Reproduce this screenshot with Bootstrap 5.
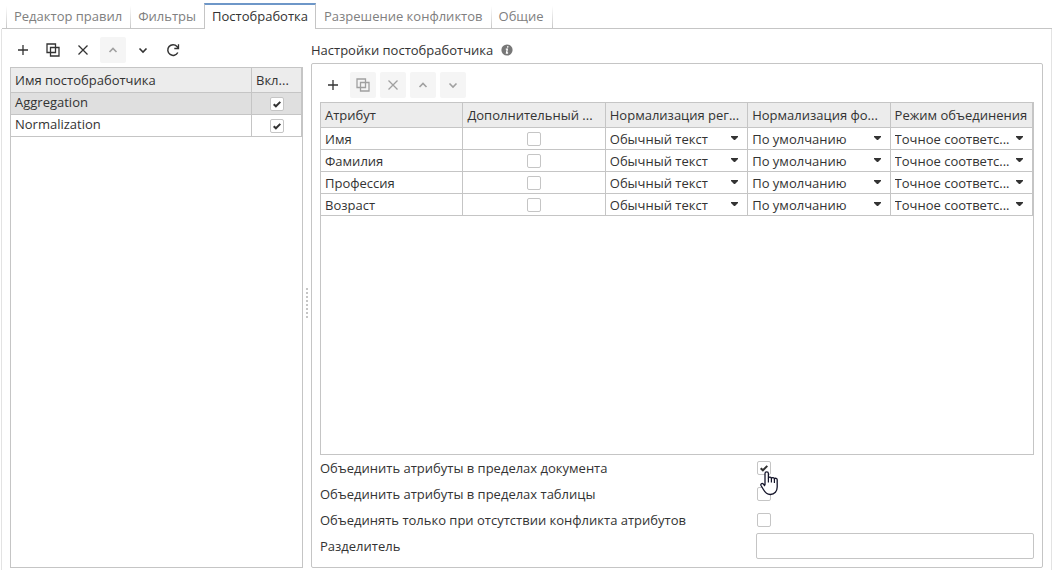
<!DOCTYPE html>
<html lang="ru">
<head>
<meta charset="utf-8">
<meta name="viewport" content="width=device-width, initial-scale=1">
<title>Постобработка</title>
<link href="https://cdn.jsdelivr.net/npm/bootstrap@5.3.0/dist/css/bootstrap.min.css" rel="stylesheet">
<style>
  :root { --line: #c5c5c5; --ink: #333; --soft: #e3e3e3; }
  body { font-family: "Open Sans", "Noto Sans", sans-serif; font-size: 13px; line-height: 20px; color: var(--ink); background: #fff; }
  .page { padding: 3px 7px 0 1px; }
  .rule-tabs { --bs-nav-tabs-border-color: var(--line); padding-left: 4px; margin-left: 1px; flex-wrap: nowrap; }
  .rule-tabs .nav-link { color: #808080; padding: 3px 8px 2px 7px; border: 0; border-radius: 0; margin: 0; white-space: nowrap; line-height: 20px; }
  .rule-tabs .nav-item { border-left: 1px solid; border-image: linear-gradient(#fff 15%, var(--line)) 1; }
  .rule-tabs .nav-item:last-child { border-right: 1px solid; }
  .rule-tabs .nav-item.current { border: 1px solid var(--line); border-image: none; border-top: 2px solid #6e97c8; border-bottom: 0; margin-bottom: -1px; background: #fff; z-index: 1; }
  .rule-tabs .nav-item.current .nav-link { color: var(--ink); background: none; padding: 1px 7px 3px; }
  .rule-tabs .nav-item.current + .nav-item { border-left: 0; }
  .rule-tabs .nav-item.current + .nav-item .nav-link { padding-left: 8px; }
  .tab-body { border: 1px solid var(--soft); border-width: 0 1px; padding: 8px 8px 2px; min-height: 0; }
  .tool { width: 26px; height: 26px; padding: 0; border: 0; border-radius: 2px; display: grid; place-items: center; color: var(--ink); background: transparent; }
  .tool:disabled { background: #f5f5f5; color: #a0a0a0; opacity: 1; }
  .tool svg { width: 16px; height: 16px; fill: none; stroke: currentColor; stroke-width: 1.3; }
  .side { flex: 0 0 293px; }
  .frame { border: 1px solid var(--line); }
  .grid-table { table-layout: fixed; border-collapse: separate; border-spacing: 0; width: 100%; }
  .grid-table th, .grid-table td { border-right: 1px solid var(--line); border-bottom: 1px solid var(--line); padding: 0 4px; height: 22px; font-weight: 400; white-space: nowrap; overflow: hidden; }
  .grid-table th { background: #ececec; height: 25px; }
  .grid-table .picked td { background: #dfdfdf; }
  .side .grid-table td:first-child { line-height: 19px; padding-bottom: 2px; }
  .tick { appearance: none; display: block; width: 14px; height: 14px; margin: 0 auto; border: 1px solid var(--line); border-radius: 2px; background: #fff center / 12px 12px no-repeat; }
  .tick:checked { background-image: url("data:image/svg+xml,%3Csvg xmlns='http://www.w3.org/2000/svg' viewBox='0 0 12 12'%3E%3Cpath d='M2.7 6.2 4.9 8.3 9.3 3.9' fill='none' stroke='%23333' stroke-width='2'/%3E%3C/svg%3E"); }
  .pick { appearance: none; display: block; width: 100%; height: 21px; border: 0; border-radius: 0; padding: 0 14px 0 0; color: inherit; font: inherit; line-height: 20px; background: transparent url("data:image/svg+xml,%3Csvg xmlns='http://www.w3.org/2000/svg' viewBox='0 0 7 4'%3E%3Cpath d='M0 0H7V1L4 4H3L0 1Z' fill='%23333'/%3E%3C/svg%3E") right 5px top 8px / 7px 4px no-repeat; }
  .splitter { flex: 0 0 8px; }
  .splitter i { width: 2px; height: 30px; background: repeating-linear-gradient(#c5c5c5 0 2px, transparent 2px 4px); }
  .content { min-width: 0; }
  .settings { border: 1px solid var(--line); border-radius: 2px; padding: 8px; min-height: 0; }
  .settings-title { height: 26px; }
  .options > div { min-height: 26px; display: flex; align-items: center; }
  .options label { flex: 0 0 61%; }
  .options .tick { margin: 0 1px; }
  .options input[type=text] { height: 26px; border: 1px solid var(--line); border-radius: 2px; min-width: 0; padding: 0 4px; }
  .hand { position: absolute; left: 4px; top: 10px; width: 18px; height: 25px; z-index: 2; }
</style>
</head>
<body>
<div class="page vh-100 d-flex flex-column">
  <ul class="nav nav-tabs rule-tabs">
    <li class="nav-item"><a class="nav-link" href="#">Редактор правил</a></li>
    <li class="nav-item"><a class="nav-link" href="#">Фильтры</a></li>
    <li class="nav-item current"><a class="nav-link" href="#" aria-current="page">Постобработка</a></li>
    <li class="nav-item"><a class="nav-link" href="#">Разрешение конфликтов</a></li>
    <li class="nav-item"><a class="nav-link" href="#">Общие</a></li>
  </ul>

  <main class="tab-body d-flex flex-grow-1">
    <section class="side d-flex flex-column">
      <div class="d-flex gap-1 mb-1">
        <button class="tool" type="button" aria-label="Добавить"><svg viewBox="0 0 16 16"><path d="M8 3v10M3 8h10"/></svg></button>
        <button class="tool" type="button" aria-label="Копировать"><svg viewBox="0 0 16 16"><path d="M2 2h8.500v8.500H2zM5.500 5.500H14V14H5.500z"/></svg></button>
        <button class="tool" type="button" aria-label="Удалить"><svg viewBox="0 0 16 16"><path d="m3.500 3.500 9 9m0-9-9 9"/></svg></button>
        <button class="tool" type="button" aria-label="Выше" disabled><svg viewBox="0 0 16 16"><path d="m4.500 10 3.500-3.500L11.500 10" stroke-width="1.600"/></svg></button>
        <button class="tool" type="button" aria-label="Ниже"><svg viewBox="0 0 16 16"><path d="m4.500 6.500 3.500 3.500 3.500-3.500" stroke-width="1.600"/></svg></button>
        <button class="tool" type="button" aria-label="Обновить"><svg viewBox="0 0 16 16"><path d="M12.800 10.500a5.300 5.300 0 1 1-.8-6L13 5.700" stroke-width="1.500"/><path d="M13.500 2.300v4.200H9.300"/></svg></button>
      </div>
      <div class="frame flex-grow-1">
        <table class="grid-table">
          <colgroup><col><col style="width:50px"></colgroup>
          <thead><tr><th scope="col">Имя постобработчика</th><th scope="col">Вкл...</th></tr></thead>
          <tbody>
            <tr class="picked"><td>Aggregation</td><td><input class="tick" type="checkbox" aria-label="Aggregation" checked></td></tr>
            <tr><td>Normalization</td><td><input class="tick" type="checkbox" aria-label="Normalization" checked></td></tr>
          </tbody>
        </table>
      </div>
    </section>

    <div class="splitter d-flex align-items-center justify-content-center"><i></i></div>

    <section class="content flex-grow-1 d-flex flex-column">
      <div class="settings-title d-flex align-items-center">
        <span>Настройки постобработчика</span>
        <svg class="ms-2" width="12" height="12" viewBox="0 0 12 12" aria-hidden="true"><circle cx="6" cy="6" r="5.600" fill="#777"/><path d="M6.900 2.200 6.600 3.600M4.800 5.200h1.500L5.500 9h1.600" fill="none" stroke="#fff" stroke-width="1.300"/></svg>
      </div>
      <div class="settings flex-grow-1 d-flex flex-column">
        <div class="d-flex gap-1 mb-1">
          <button class="tool" type="button" aria-label="Добавить атрибут"><svg viewBox="0 0 16 16"><path d="M8 3v10M3 8h10"/></svg></button>
          <button class="tool" type="button" aria-label="Копировать атрибут" disabled><svg viewBox="0 0 16 16"><path d="M2 2h8.500v8.500H2zM5.500 5.500H14V14H5.500z"/></svg></button>
          <button class="tool" type="button" aria-label="Удалить атрибут" disabled><svg viewBox="0 0 16 16"><path d="m3.500 3.500 9 9m0-9-9 9"/></svg></button>
          <button class="tool" type="button" aria-label="Атрибут выше" disabled><svg viewBox="0 0 16 16"><path d="m4.500 10 3.500-3.500L11.500 10" stroke-width="1.600"/></svg></button>
          <button class="tool" type="button" aria-label="Атрибут ниже" disabled><svg viewBox="0 0 16 16"><path d="m4.500 6.500 3.500 3.500 3.500-3.500" stroke-width="1.600"/></svg></button>
        </div>
        <div class="frame flex-grow-1">
          <table class="grid-table">
            <thead><tr><th scope="col">Атрибут</th><th scope="col">Дополнительный ...</th><th scope="col">Нормализация рег...</th><th scope="col">Нормализация фо...</th><th scope="col">Режим объединения</th></tr></thead>
            <tbody>
              <tr><td>Имя</td><td><input class="tick" type="checkbox" aria-label="Имя"></td><td><select class="pick" aria-label="Регистр"><option>Обычный текст</option></select></td><td><select class="pick" aria-label="Форма"><option>По умолчанию</option></select></td><td><select class="pick" aria-label="Режим"><option>Точное соответс...</option></select></td></tr>
              <tr><td>Фамилия</td><td><input class="tick" type="checkbox" aria-label="Фамилия"></td><td><select class="pick" aria-label="Регистр"><option>Обычный текст</option></select></td><td><select class="pick" aria-label="Форма"><option>По умолчанию</option></select></td><td><select class="pick" aria-label="Режим"><option>Точное соответс...</option></select></td></tr>
              <tr><td>Профессия</td><td><input class="tick" type="checkbox" aria-label="Профессия"></td><td><select class="pick" aria-label="Регистр"><option>Обычный текст</option></select></td><td><select class="pick" aria-label="Форма"><option>По умолчанию</option></select></td><td><select class="pick" aria-label="Режим"><option>Точное соответс...</option></select></td></tr>
              <tr><td>Возраст</td><td><input class="tick" type="checkbox" aria-label="Возраст"></td><td><select class="pick" aria-label="Регистр"><option>Обычный текст</option></select></td><td><select class="pick" aria-label="Форма"><option>По умолчанию</option></select></td><td><select class="pick" aria-label="Режим"><option>Точное соответс...</option></select></td></tr>
            </tbody>
          </table>
        </div>
        <div class="options">
          <div><label for="opt-doc">Объединить атрибуты в пределах документа</label>
            <span class="position-relative"><input class="tick" id="opt-doc" type="checkbox" checked>
              <svg class="hand" viewBox="0 0 18 25" aria-hidden="true"><path d="M5 14V2.500a1.700 1.700 0 0 1 3.400 0V7a1.600 1.600 0 0 1 3 .4 1.600 1.600 0 0 1 3 .6 1.500 1.500 0 0 1 2.800.8V16c0 4-2.500 7.500-7 7.500-3.600 0-5.300-2.300-6.800-5L1 14.500c-.7-1.500 1-2.800 2.300-1.500L5 15" fill="#fff" stroke="#15152a" stroke-width="1.300" stroke-linejoin="round"/><path d="M8.400 7v4.500m3-4v4m3-3.500V12" stroke="#15152a" stroke-width="1.200"/></svg></span></div>
          <div><label for="opt-table">Объединить атрибуты в пределах таблицы</label><input class="tick" id="opt-table" type="checkbox"></div>
          <div><label for="opt-conflict">Объединять только при отсутствии конфликта атрибутов</label><input class="tick" id="opt-conflict" type="checkbox"></div>
          <div><label for="opt-sep">Разделитель</label><input class="flex-grow-1" id="opt-sep" type="text"></div>
        </div>
      </div>
    </section>
  </main>
</div>
<script src="https://cdn.jsdelivr.net/npm/bootstrap@5.3.0/dist/js/bootstrap.bundle.min.js"></script>
</body>
</html>
